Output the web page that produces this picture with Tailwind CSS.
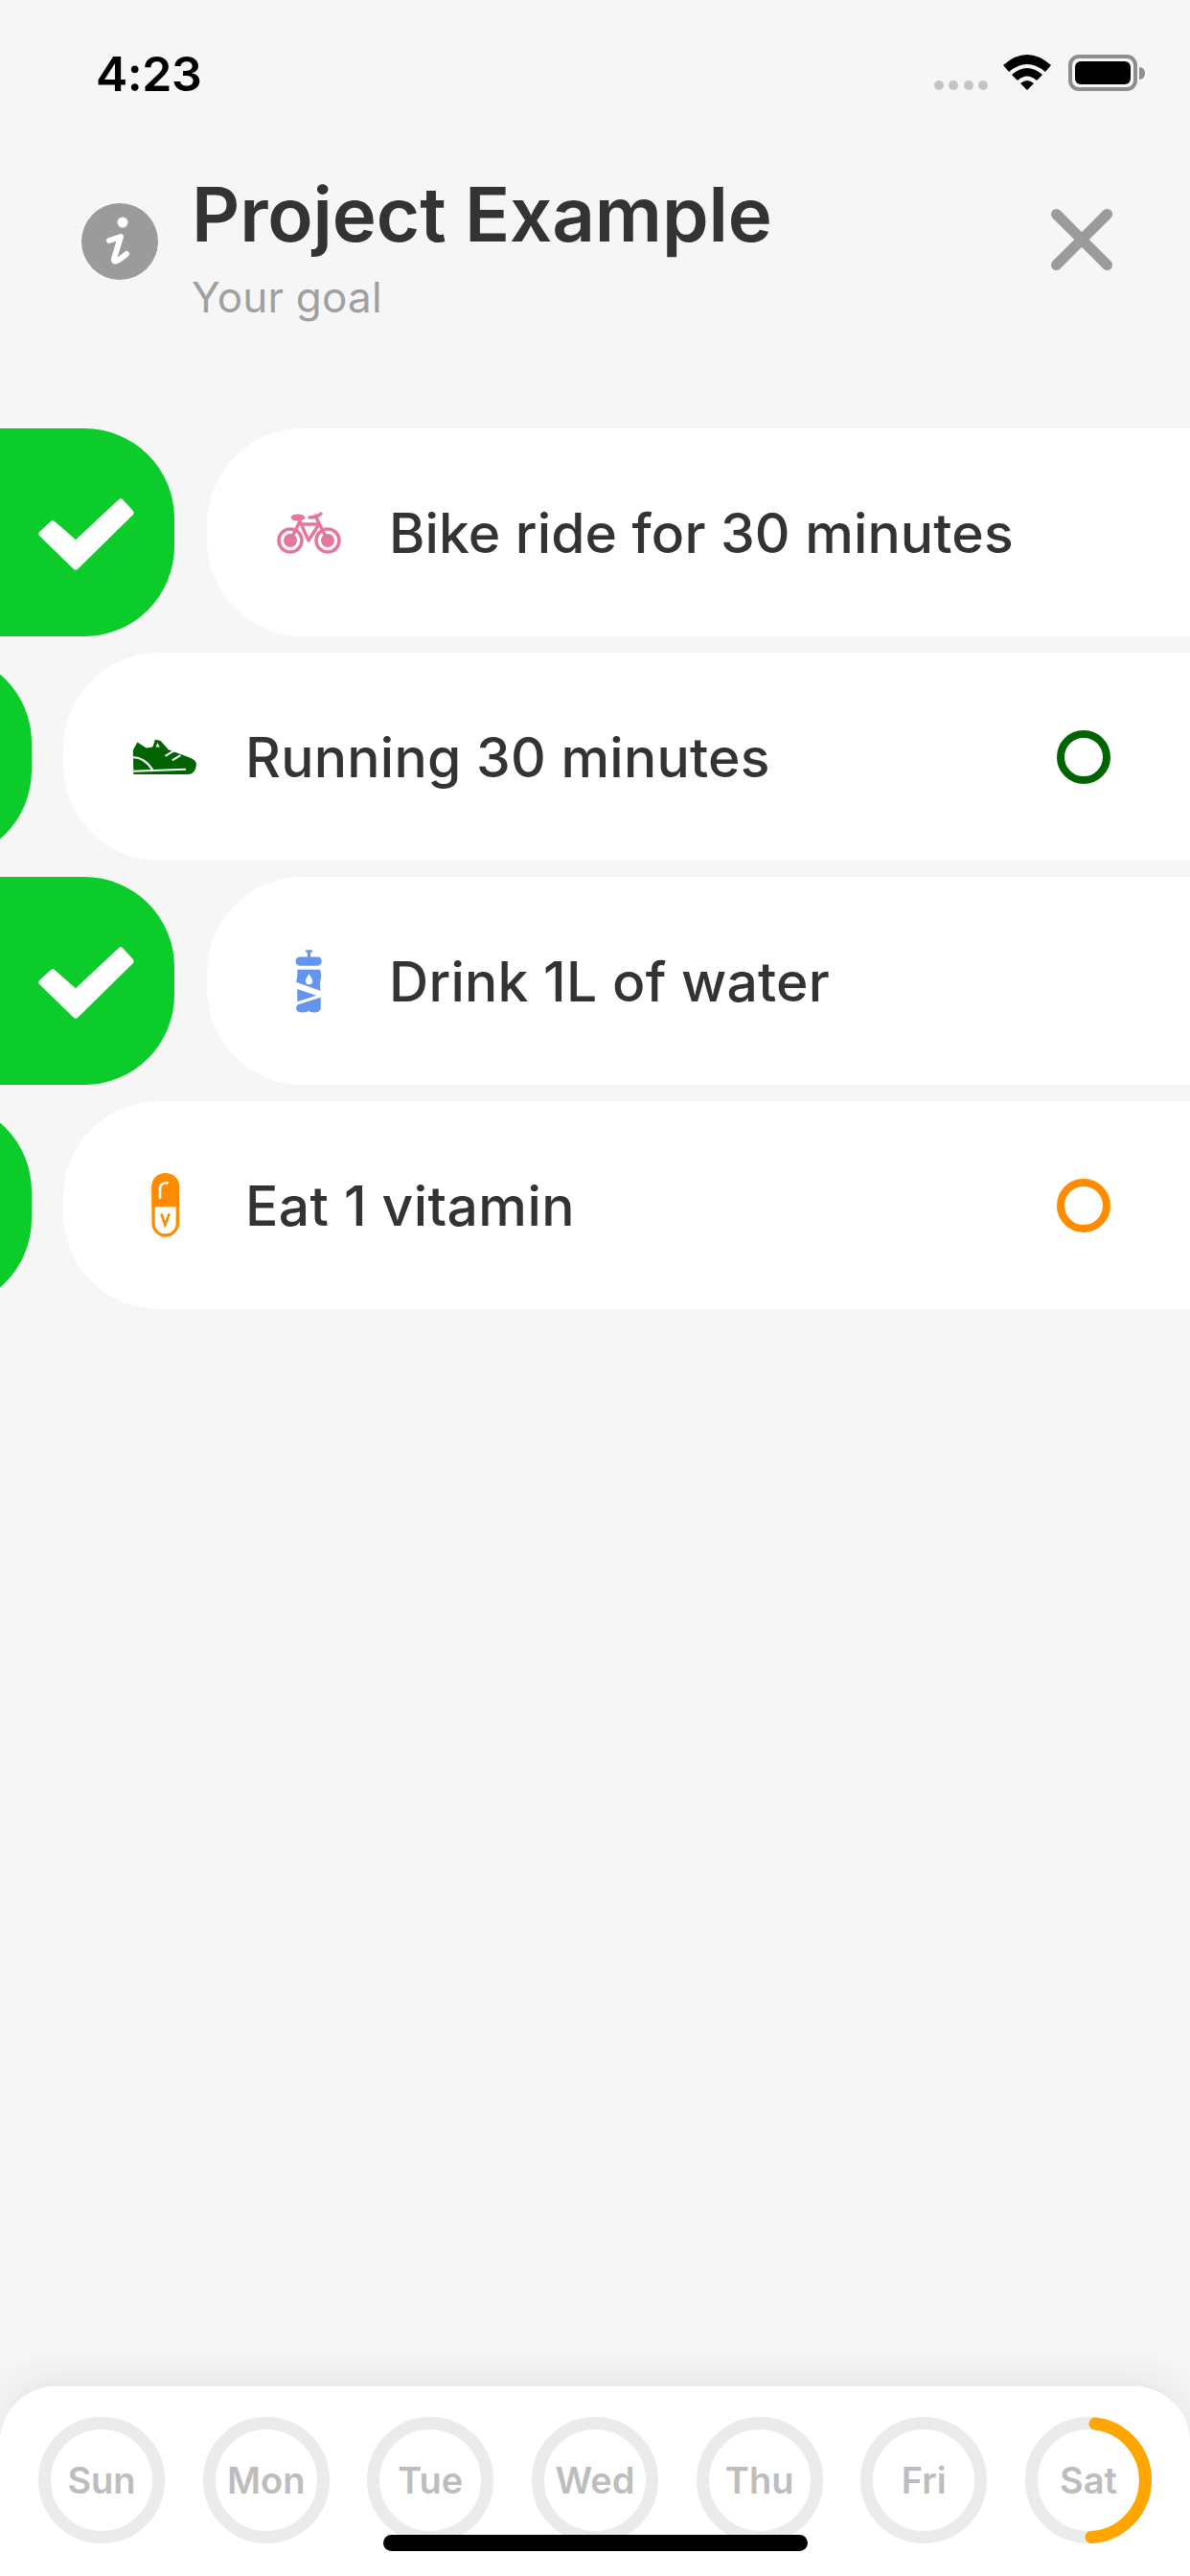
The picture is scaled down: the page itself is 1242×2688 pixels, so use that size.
<!DOCTYPE html>
<html lang="en">
<head>
<meta charset="utf-8">
<title>Project Example</title>
<script src="https://cdn.jsdelivr.net/npm/@tailwindcss/browser@4"></script>
</head>
<body class="m-0 bg-[#f6f6f6]">
<div class="relative w-[1242px] h-[2688px] overflow-hidden bg-[#f6f6f6] flex flex-col font-['Inter',sans-serif] text-[#333333]">

  <!-- status bar -->
  <div class="h-[150px] shrink-0 flex items-start pl-[100px] pr-[47px] pt-[50px]">
    <span class="text-[50px] leading-[54px] font-semibold text-black tracking-[-0.5px]">4:23</span>
    <div class="ml-auto flex items-start pt-[7px]">
      <div class="flex gap-[5.5px] mt-[27px]">
        <span class="w-[10px] h-[10px] rounded-full bg-[#c4c4c4]"></span>
        <span class="w-[10px] h-[10px] rounded-full bg-[#c4c4c4]"></span>
        <span class="w-[10px] h-[10px] rounded-full bg-[#c4c4c4]"></span>
        <span class="w-[10px] h-[10px] rounded-full bg-[#c4c4c4]"></span>
      </div>
      <svg class="ml-[16px]" width="50" height="37" viewBox="0 0 50 37">
        <path d="M0 11 Q25 -11 50 11 L44 18 Q25 2 6 18 Z" fill="#000"/>
        <path d="M9 21 Q25 7 41 21 L35 27 Q25 18 15 27 Z" fill="#000"/>
        <path d="M18 30 Q25 24 32 30 L25 37 Z" fill="#000"/>
      </svg>
      <div class="ml-[18px] w-[72px] h-[38px] rounded-[11px] border-[4px] border-[#8e8e8e] p-[3px]">
        <div class="w-full h-full rounded-[6px] bg-black"></div>
      </div>
      <span class="ml-[2px] mt-[13px] w-[6px] h-[13px] rounded-r-full bg-[#8e8e8e]"></span>
    </div>
  </div>

  <!-- header -->
  <div class="h-[297px] shrink-0 flex items-start pl-[85px] pr-[81px]">
    <svg class="mt-[62px] shrink-0" width="80" height="80" viewBox="85 212 80 80">
      <circle cx="125" cy="252" r="40" fill="#9b9b9b"/>
      <circle cx="128" cy="232" r="5.5" fill="#fff"/>
      <path d="M114 251 L126 247 L119 270 Q118 277 132 265" fill="none" stroke="#fff" stroke-width="6" stroke-linejoin="round" stroke-linecap="round"/>
    </svg>
    <div class="ml-[35px] flex flex-col">
      <span class="text-[78px] leading-[94px] font-semibold mt-[27px] tracking-[-0.15px]">Project Example</span>
      <span class="text-[44px] leading-[54px] text-[#a0a0a0] mt-[12px] tracking-[0.2px]">Your goal</span>
    </div>
    <svg class="ml-auto mt-[68px] shrink-0" width="64" height="64" viewBox="0 0 64 64">
      <path d="M5.5 5.5 L58.5 58.5 M58.5 5.5 L5.5 58.5" fill="none" stroke="#9b9b9b" stroke-width="11" stroke-linecap="round"/>
    </svg>
  </div>

  <!-- tasks -->
  <div class="flex flex-col gap-[17px]">
    <div class="h-[217px] flex">
      <div class="w-[182px] shrink-0 rounded-r-[94px] bg-[#0ccc2c]">
        <svg width="182" height="217" viewBox="0 447 182 217"><polygon points="44,557 55,547 79,568 126,524 136,535 79,591" fill="#fff" stroke="#fff" stroke-width="7" stroke-linejoin="round"/></svg>
      </div>
      <div class="ml-[34px] flex-1 flex items-center rounded-l-[100px] bg-white">
        <div class="ml-[66px] w-[80px] flex justify-center">
          <svg width="67" height="45" viewBox="0 0 67 45">
            <g fill="none" stroke="#e4779b" stroke-width="3.5" stroke-linecap="round" stroke-linejoin="round">
              <circle cx="14" cy="31" r="12"/><circle cx="53" cy="31" r="12"/>
              <path d="M14 31 L24 11 L33 31 L44 14 L25 14 M40 5 L53 31 M34 7 Q42 7 46 3"/>
            </g>
            <circle cx="14" cy="31" r="7" fill="#e4779b"/><circle cx="53" cy="31" r="7" fill="#e4779b"/>
            <ellipse cx="22" cy="7" rx="7.5" ry="3.5" fill="#e4779b"/>
          </svg>
        </div>
        <span class="ml-[44px] pt-[2px] text-[57px] leading-[66px] font-medium tracking-[0.15px]">Bike ride for 30 minutes</span>
      </div>
    </div>

    <div class="h-[217px] flex">
      <div class="w-[182px] ml-[-149px] shrink-0 rounded-r-[94px] bg-[#0ccc2c]"></div>
      <div class="ml-[33px] flex-1 flex items-center rounded-l-[100px] bg-white">
        <div class="ml-[66px] w-[80px] flex justify-center">
          <svg width="73" height="43" viewBox="50 55 220 130">
            <path d="M58 100 L72 75 L100 93 L120 90 L128 66 L145 70 L170 98 L235 122 Q258 130 258 145 Q256 175 232 176 L60 176 Z" fill="#006400"/>
            <path d="M58 122 Q95 122 120 162 M60 166 L225 160 M160 118 L190 100 M182 132 L208 116" fill="none" stroke="#fff" stroke-width="6"/>
            <path d="M130 90 L135 76 L143 90 Z" fill="#fff"/>
          </svg>
        </div>
        <span class="ml-[44px] pt-[2px] text-[57px] leading-[66px] font-medium tracking-[0.25px]">Running 30 minutes</span>
        <span class="ml-auto mr-[83px] w-[56px] h-[56px] rounded-full border-[8px] border-[#006400]"></span>
      </div>
    </div>

    <div class="h-[217px] flex">
      <div class="w-[182px] shrink-0 rounded-r-[94px] bg-[#0ccc2c]">
        <svg width="182" height="217" viewBox="0 447 182 217"><polygon points="44,557 55,547 79,568 126,524 136,535 79,591" fill="#fff" stroke="#fff" stroke-width="7" stroke-linejoin="round"/></svg>
      </div>
      <div class="ml-[34px] flex-1 flex items-center rounded-l-[100px] bg-white">
        <div class="ml-[66px] w-[80px] flex justify-center">
          <svg width="33" height="72" viewBox="75 40 100 215">
            <path d="M115 48 H135 V56 H130 V70 H151 Q165 70 165 84 Q165 98 151 98 H97 Q83 98 83 84 Q83 70 97 70 H120 V56 H115 Z" fill="#6495ed"/>
            <path d="M88 110 H160 Q166 128 161 145 Q158 160 162 178 L84 150 Q90 130 88 110 Z" fill="#6495ed"/>
            <path d="M88 172 L148 192 L88 212 Z" fill="#6495ed"/>
            <path d="M162 198 L162 232 Q160 246 142 246 Q125 246 125 240 Q120 246 104 246 Q86 246 84 232 Q86 226 88 222 Z" fill="#6495ed"/>
            <path d="M125 124 Q136 140 136 146 A11 11 0 0 1 114 146 Q114 140 125 124 Z" fill="#fff"/>
          </svg>
        </div>
        <span class="ml-[44px] pt-[2px] text-[57px] leading-[66px] font-medium tracking-[0.25px]">Drink 1L of water</span>
      </div>
    </div>

    <div class="h-[217px] flex">
      <div class="w-[182px] ml-[-149px] shrink-0 rounded-r-[94px] bg-[#0ccc2c]"></div>
      <div class="ml-[33px] flex-1 flex items-center rounded-l-[100px] bg-white">
        <div class="ml-[66px] w-[80px] flex justify-center">
          <svg width="35" height="73" viewBox="75 35 105 220">
            <rect x="90" y="50" width="76" height="190" rx="38" fill="#fff" stroke="#ff8c00" stroke-width="10"/>
            <path d="M85 150 V83 A43 38 0 0 1 171 83 V150 Z" fill="#ff8c00"/>
            <path d="M111 122 V92 Q111 76 134 75" fill="none" stroke="#fff" stroke-width="8" stroke-linecap="round"/>
            <path d="M115 172 L127 207 L140 172" fill="none" stroke="#ff8c00" stroke-width="8"/>
          </svg>
        </div>
        <span class="ml-[44px] pt-[2px] text-[57px] leading-[66px] font-medium tracking-[0.4px]">Eat 1 vitamin</span>
        <span class="ml-auto mr-[83px] w-[56px] h-[56px] rounded-full border-[8px] border-[#ff8c00]"></span>
      </div>
    </div>
  </div>

  <!-- week bar -->
  <div class="mt-auto h-[198px] shrink-0 rounded-t-[58px] bg-white shadow-[0_-8px_36px_rgba(40,50,60,0.09)] flex justify-between items-start px-[40px] pt-[32px] text-[38px] leading-[46px] font-semibold text-[#bdbdbd]">
    <div class="w-[132px] h-[132px] rounded-full border-[13px] border-[#ebebeb] flex items-center justify-center">Sun</div>
    <div class="w-[132px] h-[132px] rounded-full border-[13px] border-[#ebebeb] flex items-center justify-center">Mon</div>
    <div class="w-[132px] h-[132px] rounded-full border-[13px] border-[#ebebeb] flex items-center justify-center">Tue</div>
    <div class="w-[132px] h-[132px] rounded-full border-[13px] border-[#ebebeb] flex items-center justify-center">Wed</div>
    <div class="w-[132px] h-[132px] rounded-full border-[13px] border-[#ebebeb] flex items-center justify-center">Thu</div>
    <div class="w-[132px] h-[132px] rounded-full border-[13px] border-[#ebebeb] flex items-center justify-center">Fri</div>
    <div class="relative w-[132px] h-[132px] rounded-full border-[13px] border-[#ebebeb] flex items-center justify-center">Sat
      <svg class="absolute left-[-13px] top-[-13px]" width="132" height="132" viewBox="0 0 132 132">
        <path d="M73 7 A59.5 59.5 0 0 1 69 125.5" fill="none" stroke="#ffa500" stroke-width="13" stroke-linecap="round"/>
      </svg>
    </div>
  </div>

  <!-- home indicator -->
  <div class="absolute left-[400px] top-[2645px] w-[443px] h-[17px] rounded-full bg-black"></div>
</div>
</body>
</html>
